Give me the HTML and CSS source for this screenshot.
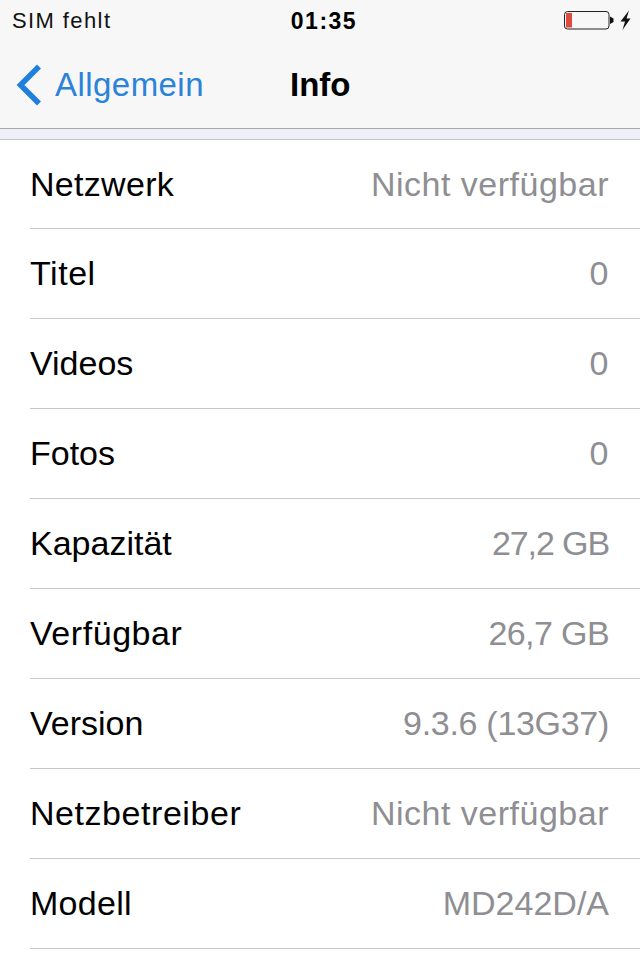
FILE: index.html
```html
<!DOCTYPE html>
<html lang="de">
<head>
  <meta charset="UTF-8" />
  <meta name="viewport" content="width=device-width, initial-scale=1.0"/>
  <title>Info</title>
  <link rel="stylesheet" href="styles.css">
</head>
<body>

  <div class="header">
    <div class="statusbar">
      <div class="carrier">SIM fehlt</div>
      <div class="clock">01:35</div>
      <div class="battery-wrap">
        <svg width="70" height="24" viewBox="0 0 70 24">
          <rect x="3.500" y="2.500" width="44.500" height="17.500" rx="3" fill="none" stroke="#222" stroke-width="1"/>
          <rect x="5" y="4" width="6" height="14.500" fill="#dd4b3f"/>
          <path d="M49 7.500 L52.500 9.500 V13 L49 15z" fill="#111"/>
          <path d="M68 1.500 L59.500 12.500 H64 L61.500 21 L69.500 9.500 H65.500 Z" fill="#111"/>
        </svg>
      </div>
    </div>
    <div class="navbar">
      <div class="back">
        <svg width="30" height="44" viewBox="0 0 30 44">
          <path d="M27 3.500 L8.500 22 L27 40.500" fill="none" stroke="#1f7fdf" stroke-width="5.500"/>
        </svg>
        <span>Allgemein</span>
      </div>
      <div class="title">Info</div>
    </div>
  </div>

  <div class="band"></div>

  <div class="list">
    <div class="row"><span class="mid">Netzwerk</span><span class="val">Nicht verfügbar</span></div>
    <div class="row"><span class="wide">Titel</span><span class="val">0</span></div>
    <div class="row"><span>Videos</span><span class="val">0</span></div>
    <div class="row"><span>Fotos</span><span class="val">0</span></div>
    <div class="row"><span>Kapazität</span><span class="val num">27,2 GB</span></div>
    <div class="row"><span class="wide">Verfügbar</span><span class="val num2">26,7 GB</span></div>
    <div class="row"><span>Version</span><span class="val ver">9.3.6 (13G37)</span></div>
    <div class="row"><span class="wide">Netzbetreiber</span><span class="val">Nicht verfügbar</span></div>
    <div class="row"><span class="mid">Modell</span><span class="val plain">MD242D/A</span></div>
  </div>

</body>
</html>
```

FILE: styles.css
```css
body {
  font-family: 'Liberation Sans', Arial, sans-serif;
  background: #fff;
  color: #000;
  margin: 0;
  padding: 0;
  height: 960px;
  overflow: hidden;
}

.header {
  background: #f7f7f8;
  height: 128px;
  border-bottom: 1px solid #a9a9ac;
}

.statusbar {
  height: 42px;
  display: grid;
  grid-template-columns: 1fr auto 1fr;
  align-items: center;
  padding: 0 12px;
}

.carrier {
  font-size: 22px;
  letter-spacing: 1.4px;
  color: #111;
}

.clock {
  font-size: 23px;
  font-weight: bold;
  letter-spacing: 1.5px;
  margin-left: 8px;
}

.battery-wrap {
  display: flex;
  justify-content: flex-end;
  margin-right: -3px;
}

.navbar {
  height: 86px;
  display: flex;
  align-items: center;
  padding-left: 12px;
}

.back {
  width: 278px;
  display: flex;
  align-items: center;
  gap: 13px;
  color: #2b83d9;
  font-size: 33px;
  letter-spacing: 0.45px;
}

.back svg {
  flex: none;
}

.title {
  font-size: 33px;
  font-weight: bold;
}

.band {
  height: 10px;
  background: #efeff8;
  border-bottom: 1px solid #c4c4c6;
}

.row {
  height: 89px;
  margin-left: 30px;
  padding-right: 31px;
  border-bottom: 1px solid #c8c8ca;
  display: flex;
  justify-content: space-between;
  align-items: center;
  font-size: 34px;
}

.row:first-child {
  height: 88px;
}

.mid {
  letter-spacing: 0.3px;
}

.wide {
  letter-spacing: 0.55px;
}

.val {
  color: #8e8e93;
  letter-spacing: 0.5px;
}

.val.num {
  letter-spacing: -1.1px;
}

.val.num2 {
  letter-spacing: -0.6px;
}

.val.ver {
  letter-spacing: -0.3px;
}

.val.plain {
  letter-spacing: 0;
}
```
